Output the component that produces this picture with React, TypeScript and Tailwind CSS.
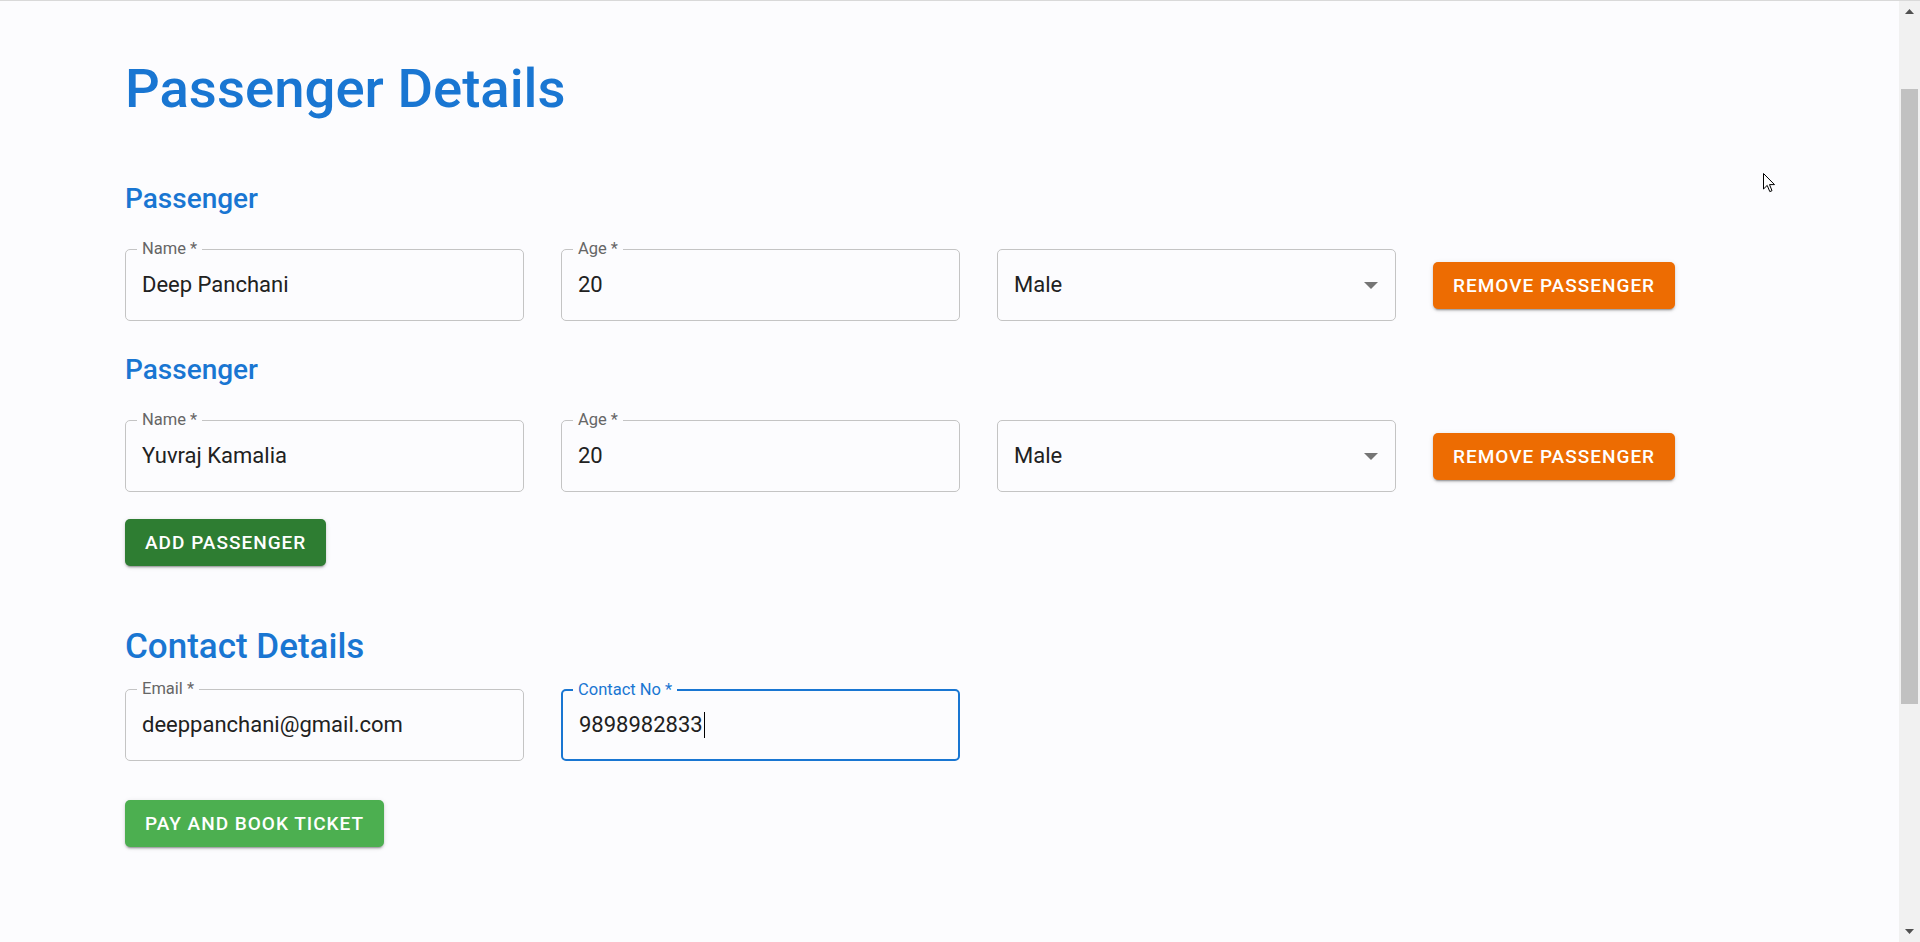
import React from "react";

const font = { fontFamily: "Roboto, 'Noto Sans', Arial, sans-serif" };

function Field({
  label,
  value,
  focused = false,
}: {
  label: string;
  value: string;
  focused?: boolean;
}) {
  return (
    <div
      className={
        "relative w-[399px] h-[72px] rounded-[5px] flex items-center px-[16px] " +
        (focused ? "border-2 border-[#1976d2]" : "border border-[#c4c4c4]")
      }
    >
      <span
        className={
          "absolute top-[-11px] px-[5px] bg-[#fcfcfe] text-[16.5px] leading-[20px] " +
          (focused ? "left-[10px] text-[#1976d2]" : "left-[11px] text-[#666666]")
        }
      >
        {label}
      </span>
      <span className="text-[22px] leading-[26px] text-[#212121] flex items-center">
        {value}
        {focused && <span className="inline-block w-px h-[26px] bg-black ml-px" />}
      </span>
    </div>
  );
}

function SelectField({ value }: { value: string }) {
  return (
    <div className="w-[399px] h-[72px] rounded-[5px] border border-[#c4c4c4] flex items-center justify-between pl-[16px] pr-[17px]">
      <span className="text-[22px] leading-[26px] text-[#212121]">{value}</span>
      <svg width="14" height="7" viewBox="0 0 14 7">
        <path d="M0 0 L14 0 L7 7 Z" fill="#757575" />
      </svg>
    </div>
  );
}

const shadow =
  "shadow-[0px_3px_1px_-2px_rgba(0,0,0,0.2),0px_2px_2px_0px_rgba(0,0,0,0.14),0px_1px_5px_0px_rgba(0,0,0,0.12)]";

function Btn({ children, color }: { children: React.ReactNode; color: string }) {
  return (
    <button
      className={
        "h-[47px] px-[20px] rounded-[5px] text-white text-[19px] font-medium tracking-[1px] uppercase leading-[47px] " +
        shadow +
        " " +
        color
      }
    >
      {children}
    </button>
  );
}

function PassengerBlock({ name, mt }: { name: string; mt: string }) {
  return (
    <div className={mt}>
      <h2 className="text-[28px] leading-[32px] font-medium text-[#1976d2]">Passenger</h2>
      <div className="mt-[34px] flex items-center gap-[37px]">
        <Field label="Name *" value={name} />
        <Field label="Age *" value="20" />
        <SelectField value="Male" />
        <Btn color="bg-[#ed6c02]">Remove Passenger</Btn>
      </div>
    </div>
  );
}

export default function App() {
  return (
    <div
      className="relative w-full h-[942px] flex border-t border-[#d9d9d9] bg-[#fcfcfe] overflow-hidden"
      style={font}
    >
      <main className="flex-1 pl-[125px] pt-[60px]">
        <h1 className="text-[54.5px] leading-[55px] font-medium text-[#1976d2]">Passenger Details</h1>
        <PassengerBlock name="Deep Panchani" mt="mt-[67px]" />
        <PassengerBlock name="Yuvraj Kamalia" mt="mt-[33px]" />
        <div className="mt-[27px]">
          <Btn color="bg-[#2e7d32]">Add Passenger</Btn>
        </div>
        <h2 className="mt-[61px] text-[35px] leading-[40px] font-medium text-[#1976d2]">Contact Details</h2>
        <div className="mt-[22px] flex gap-[37px]">
          <Field label="Email *" value="deeppanchani@gmail.com" />
          <Field label="Contact No *" value="9898982833" focused />
        </div>
        <div className="mt-[39px]">
          <Btn color="bg-[#4caf50]">Pay and Book Ticket</Btn>
        </div>
      </main>
      <aside className="w-[21px] bg-[#f1f1f1] flex flex-col items-center">
        <div className="h-[21px] flex items-center justify-center">
          <svg width="9" height="5" viewBox="0 0 9 5">
            <path d="M0 5 L4.5 0 L9 5 Z" fill="#505050" />
          </svg>
        </div>
        <div className="mt-[67px] w-[17px] h-[615px] bg-[#c1c1c1]" />
        <div className="flex-1" />
        <div className="h-[21px] flex items-center justify-center">
          <svg width="9" height="5" viewBox="0 0 9 5">
            <path d="M0 0 L4.5 5 L9 0 Z" fill="#505050" />
          </svg>
        </div>
      </aside>
      <svg
        className="absolute left-[1763px] top-[172px]"
        width="13"
        height="20"
        viewBox="0 0 13 20"
      >
        <path
          d="M0.5 0.5 L0.5 16 L4.2 12.4 L6.8 18.6 L9 17.7 L6.5 11.6 L11.5 11.6 Z"
          fill="white"
          stroke="black"
          strokeWidth="1"
          strokeLinejoin="round"
        />
      </svg>
    </div>
  );
}
